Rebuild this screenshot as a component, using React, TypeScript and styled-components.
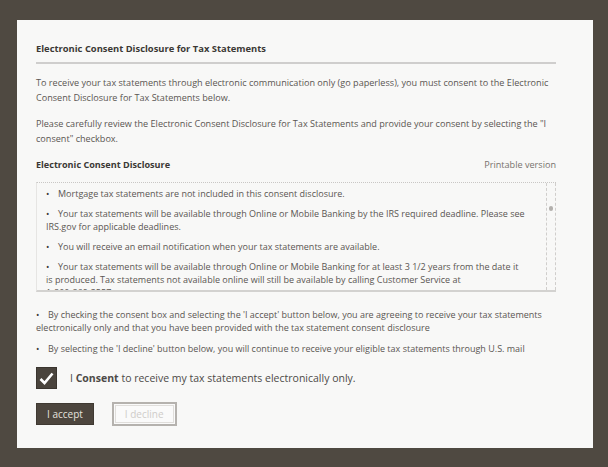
import React from "react";
import styled, { createGlobalStyle } from "styled-components";

const GlobalStyle = createGlobalStyle`
  html, body {
    margin: 0;
    padding: 0;
    background: #4f4941;
  }
  body {
    font-family: "Open Sans", "DejaVu Sans", sans-serif;
  }
`;

const Page = styled.div`
  width: 608px;
  height: 467px;
  padding: 20px 15px 0 17px;
  box-sizing: border-box;
`;

const Card = styled.div`
  width: 576px;
  height: 428px;
  background: #f8f8f7;
  box-sizing: border-box;
  padding: 22px 37px 0 19px;
  color: #5a5652;
`;

const Title = styled.h1`
  margin: 0;
  font-size: 9.4px;
  font-weight: 700;
  color: #3b3835;
  padding-bottom: 7px;
  border-bottom: 2px solid #cfcecd;
`;

const Para = styled.p`
  margin: 11px 0 0;
  font-size: 9.1px;
  line-height: 15px;
`;

const SectionHead = styled.div`
  display: flex;
  justify-content: space-between;
  align-items: baseline;
  margin-top: 12px;
  font-size: 9.1px;
`;

const SectionTitle = styled.span`
  font-weight: 700;
  color: #3b3835;
`;

const Printable = styled.span`
  color: #77726d;
`;

const ScrollBox = styled.div`
  position: relative;
  margin-top: 11px;
  height: 103px;
  overflow: hidden;
  border-top: 1px dotted #c9c7c5;
  border-left: 1px solid #e6e5e3;
  border-bottom: 2px solid #d3d2d0;
  padding: 4px 30px 0 9px;
`;

const Track = styled.div`
  position: absolute;
  top: 0;
  bottom: 0;
  right: 0;
  width: 8px;
  border-left: 1px dashed #d0cecc;
  border-right: 1px dashed #d0cecc;
`;

const Thumb = styled.div`
  position: absolute;
  top: 23px;
  right: 3px;
  width: 4px;
  height: 5px;
  border-radius: 2px;
  background: #b3b0ad;
`;

const List = styled.ul<{ $gap: number }>`
  margin: 0;
  padding: 0;
  list-style: none;
  font-size: 9px;
  line-height: 13px;
  display: flex;
  flex-direction: column;
  gap: ${(p) => p.$gap}px;
`;

const Item = styled.li`
  &::before {
    content: "\u2022";
    display: inline-block;
    width: 12px;
    font-size: 9px;
    color: #3f3b37;
  }
`;

const Phone = styled.span`
  white-space: nowrap;
`;

const Notes = styled(List)`
  margin-top: 16px;
`;

const ConsentRow = styled.label`
  display: flex;
  align-items: center;
  gap: 13px;
  margin-top: 12px;
  font-size: 10.5px;
  color: #4d4a47;
`;

const CheckBox = styled.span`
  width: 21px;
  height: 22px;
  background: #4a443d;
  border: 1px solid #3a352f;
  box-sizing: border-box;
  display: flex;
  align-items: center;
  justify-content: center;
`;

const Buttons = styled.div`
  display: flex;
  align-items: center;
  gap: 18px;
  margin-top: 13px;
`;

const Button = styled.button<{ $primary?: boolean }>`
  font-family: inherit;
  font-size: 10px;
  height: ${(p) => (p.$primary ? 22 : 24)}px;
  padding: 0 ${(p) => (p.$primary ? 10 : 11)}px;
  background: ${(p) => (p.$primary ? "#4d463e" : "#fafafa")};
  color: ${(p) => (p.$primary ? "#e6e3df" : "#cfccc9")};
  border: ${(p) => (p.$primary ? "1px solid #3f3932" : "2px solid #b5b2ae")};
  outline: ${(p) => (p.$primary ? "none" : "1px solid #e0dedb")};
  outline-offset: -4px;
  cursor: pointer;
`;

export default function App() {
  return (
    <Page>
      <GlobalStyle />
      <Card>
        <Title>Electronic Consent Disclosure for Tax Statements</Title>
        <Para>
          To receive your tax statements through electronic communication only (go paperless), you must consent to the
          Electronic Consent Disclosure for Tax Statements below.
        </Para>
        <Para>
          Please carefully review the Electronic Consent Disclosure for Tax Statements and provide your consent by
          selecting the "I consent" checkbox.
        </Para>
        <SectionHead>
          <SectionTitle>Electronic Consent Disclosure</SectionTitle>
          <Printable>Printable version</Printable>
        </SectionHead>
        <ScrollBox>
          <List $gap={7}>
            <Item>Mortgage tax statements are not included in this consent disclosure.</Item>
            <Item>
              Your tax statements will be available through Online or Mobile Banking by the IRS required deadline.
              Please see IRS.gov for applicable deadlines.
            </Item>
            <Item>You will receive an email notification when your tax statements are available.</Item>
            <Item>
              Your tax statements will be available through Online or Mobile Banking for at least 3 1/2 years from the
              date it is produced. Tax statements not available online will still be available by calling Customer
              Service at <Phone>1-800-869-3557.</Phone>
            </Item>
          </List>
          <Track />
          <Thumb />
        </ScrollBox>
        <Notes $gap={8}>
          <Item>
            By checking the consent box and selecting the 'I accept' button below, you are agreeing to receive your tax
            statements electronically only and that you have been provided with the tax statement consent disclosure
          </Item>
          <Item>
            By selecting the 'I decline' button below, you will continue to receive your eligible tax statements
            through U.S. mail
          </Item>
        </Notes>
        <ConsentRow>
          <CheckBox>
            <svg width="15" height="13" viewBox="0 0 15 13">
              <path d="M1.5 7 L5.5 11 L13.5 1.5" fill="none" stroke="#ffffff" strokeWidth="2.6" />
            </svg>
          </CheckBox>
          <span>
            I <b>Consent</b> to receive my tax statements electronically only.
          </span>
        </ConsentRow>
        <Buttons>
          <Button $primary>I accept</Button>
          <Button>I decline</Button>
        </Buttons>
      </Card>
    </Page>
  );
}
